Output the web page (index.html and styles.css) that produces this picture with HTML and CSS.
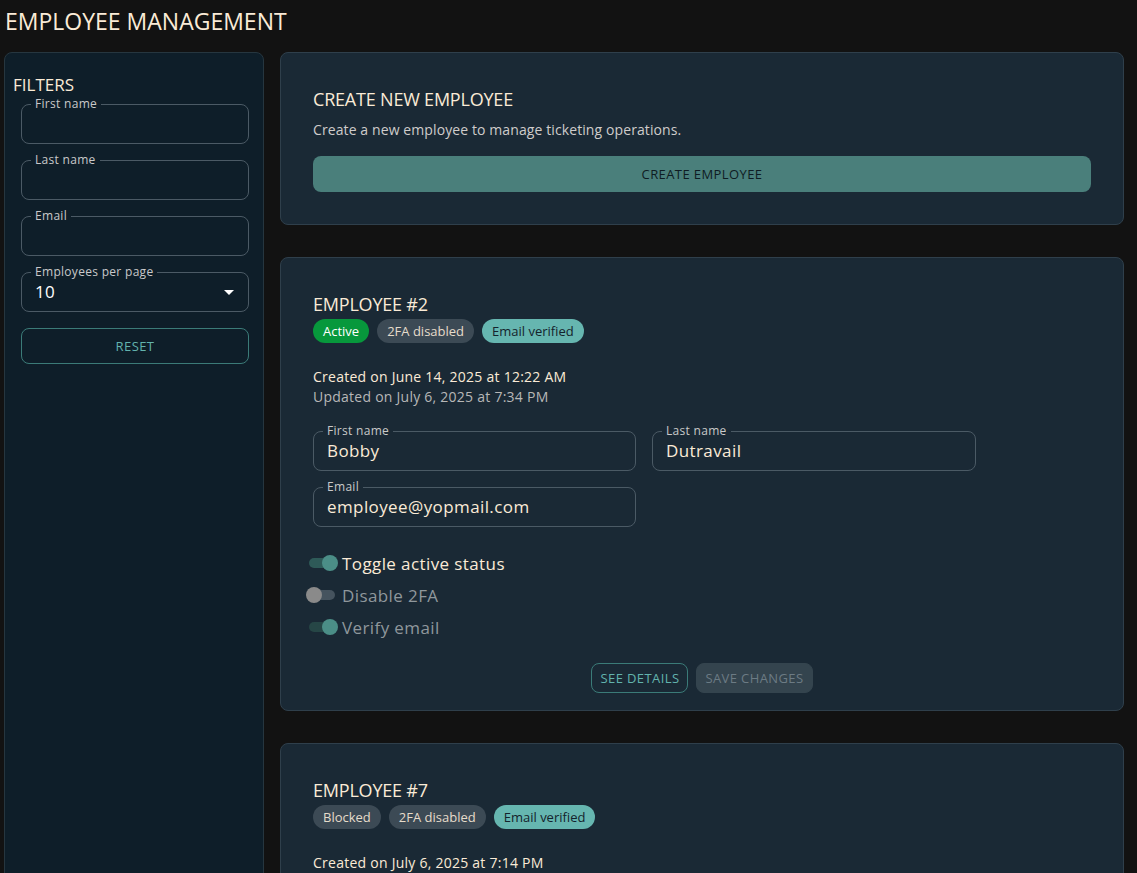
FILE: index.html
```html
<!DOCTYPE html>
<html lang="en">
<head>
<meta charset="utf-8">
<title>Employee Management</title>
<link rel="stylesheet" href="styles.css">
</head>
<body>
<h1 class="page-title">EMPLOYEE MANAGEMENT</h1>
<div class="layout">
  <aside class="sidebar">
    <h2 class="sidebar-title">FILTERS</h2>
    <form class="filters">
      <fieldset class="field"><legend>First name</legend><div class="field-value"></div></fieldset>
      <fieldset class="field"><legend>Last name</legend><div class="field-value"></div></fieldset>
      <fieldset class="field"><legend>Email</legend><div class="field-value"></div></fieldset>
      <fieldset class="field"><legend>Employees per page</legend>
        <div class="field-value select">10<svg class="caret" width="10" height="5" viewBox="0 0 10 5"><path d="M0 0h10L5 5z" fill="#ffffff"/></svg></div>
      </fieldset>
      <button type="button" class="btn btn-outline btn-block">RESET</button>
    </form>
  </aside>

  <main class="main">
    <section class="card">
      <h2 class="card-title">CREATE NEW EMPLOYEE</h2>
      <p class="card-desc">Create a new employee to manage ticketing operations.</p>
      <button type="button" class="btn btn-primary">CREATE EMPLOYEE</button>
    </section>

    <section class="card card-employee">
      <h2 class="card-title">EMPLOYEE #2</h2>
      <div class="chips">
        <span class="chip chip-green">Active</span>
        <span class="chip chip-grey">2FA disabled</span>
        <span class="chip chip-teal">Email verified</span>
      </div>
      <div class="dates">
        <p class="created">Created on June 14, 2025 at 12:22 AM</p>
        <p class="updated">Updated on July 6, 2025 at 7:34 PM</p>
      </div>
      <div class="form-grid">
        <fieldset class="field"><legend>First name</legend><div class="field-value">Bobby</div></fieldset>
        <fieldset class="field"><legend>Last name</legend><div class="field-value">Dutravail</div></fieldset>
        <fieldset class="field"><legend>Email</legend><div class="field-value">employee@yopmail.com</div></fieldset>
      </div>
      <div class="toggles">
        <label class="toggle on"><span class="switch"><span class="track"></span><span class="thumb"></span></span><span class="toggle-label">Toggle active status</span></label>
        <label class="toggle off disabled"><span class="switch"><span class="track"></span><span class="thumb"></span></span><span class="toggle-label">Disable 2FA</span></label>
        <label class="toggle on disabled"><span class="switch"><span class="track"></span><span class="thumb"></span></span><span class="toggle-label">Verify email</span></label>
      </div>
      <div class="actions">
        <button type="button" class="btn btn-outline btn-small">SEE DETAILS</button>
        <button type="button" class="btn btn-disabled btn-small">SAVE CHANGES</button>
      </div>
    </section>

    <section class="card card-employee">
      <h2 class="card-title">EMPLOYEE #7</h2>
      <div class="chips">
        <span class="chip chip-grey">Blocked</span>
        <span class="chip chip-grey">2FA disabled</span>
        <span class="chip chip-teal">Email verified</span>
      </div>
      <div class="dates">
        <p class="created">Created on July 6, 2025 at 7:14 PM</p>
        <p class="updated">Updated on July 6, 2025 at 7:20 PM</p>
      </div>
      <div class="form-grid">
        <fieldset class="field"><legend>First name</legend><div class="field-value">Jane</div></fieldset>
        <fieldset class="field"><legend>Last name</legend><div class="field-value">Doe</div></fieldset>
        <fieldset class="field"><legend>Email</legend><div class="field-value">jane.doe@yopmail.com</div></fieldset>
      </div>
      <div class="toggles">
        <label class="toggle off"><span class="switch"><span class="track"></span><span class="thumb"></span></span><span class="toggle-label">Toggle active status</span></label>
        <label class="toggle off disabled"><span class="switch"><span class="track"></span><span class="thumb"></span></span><span class="toggle-label">Disable 2FA</span></label>
        <label class="toggle on disabled"><span class="switch"><span class="track"></span><span class="thumb"></span></span><span class="toggle-label">Verify email</span></label>
      </div>
      <div class="actions">
        <button type="button" class="btn btn-outline btn-small">SEE DETAILS</button>
        <button type="button" class="btn btn-disabled btn-small">SAVE CHANGES</button>
      </div>
    </section>
  </main>
</div>
</body>
</html>
```

FILE: styles.css
```css
* { box-sizing: border-box; }

html { background: #121212; }

body {
  margin: 0;
  padding: 0 13px 0 4px;
  background: #121212;
  color: #faebd7;
  font-family: "Open Sans", "DejaVu Sans", sans-serif;
}

.page-title {
  margin: 0 0 10px 1px;
  font-size: 23px;
  font-weight: 400;
  line-height: 42px;
  letter-spacing: 0;
  color: #faebd7;
}

.layout {
  display: grid;
  grid-template-columns: 260px 1fr;
  gap: 16px;
  align-items: stretch;
}

/* Sidebar */
.sidebar {
  background: #0e1e29;
  border: 1px solid #26363f;
  border-radius: 8px;
  padding: 19px 14px 24px 8px;
}

.sidebar-title {
  margin: 0;
  font-size: 17px;
  font-weight: 400;
  line-height: 25px;
  color: #faebd7;
}

.filters {
  display: flex;
  flex-direction: column;
  gap: 9px;
  padding-left: 8px;
}

.filters .btn-block { margin-top: 7px; }

/* Outlined field */
.field {
  margin: 0;
  padding: 0 13px;
  border: 1px solid #4b5a65;
  border-radius: 8px;
  height: 47px;
  min-width: 0;
}

.field legend {
  margin-left: -4px;
  padding: 0 4px;
  font-size: 12px;
  line-height: 14px;
  letter-spacing: 0.3px;
  color: #c9c9c9;
}

.field-value {
  height: 26px;
  line-height: 26px;
  font-size: 17px;
  letter-spacing: 0.4px;
  color: #faebd7;
  white-space: nowrap;
}

.sidebar .field-value { color: #ffffff; }

.select {
  display: flex;
  align-items: center;
  justify-content: space-between;
  padding-right: 1px;
}

.caret { display: block; }

/* Buttons */
.btn {
  font-family: inherit;
  font-size: 13px;
  border-radius: 8px;
  cursor: pointer;
  letter-spacing: 0.4px;
}

.btn-block {
  height: 36px;
  width: 100%;
}

.btn-outline {
  background: transparent;
  border: 1px solid #3b7b78;
  color: #62b3ad;
}

.btn-primary {
  display: block;
  width: 100%;
  height: 36px;
  margin-top: 16px;
  background: #4a7f7b;
  border: none;
  color: #0f1c23;
}

.btn-small {
  height: 30px;
  padding: 0 8px;
}

.btn-disabled {
  background: #34444e;
  border: 1px solid #34444e;
  color: #6c7b84;
}

/* Main column */
.main {
  display: flex;
  flex-direction: column;
  gap: 32px;
  min-width: 0;
}

.card {
  background: #1a2935;
  border: 1px solid #2f3f4b;
  border-radius: 8px;
  padding: 32px;
}

.card-employee { padding-bottom: 17px; }

.card-title {
  margin: 0;
  font-size: 18px;
  font-weight: 400;
  line-height: 28px;
  letter-spacing: -0.2px;
  color: #faebd7;
}

.card-desc {
  margin: 7px 0 0;
  font-size: 14px;
  line-height: 20px;
  letter-spacing: 0.1px;
  color: #cfcccb;
}

.chips {
  display: flex;
  gap: 8px;
  margin-top: 1px;
}

.chip {
  display: inline-flex;
  align-items: center;
  height: 24px;
  padding: 0 10px;
  border-radius: 12px;
  font-size: 13px;
}

.chip-green { background: #07983c; color: #ffffff; }
.chip-grey { background: #3c4a55; color: #e6dccb; }
.chip-teal { background: #66b6b0; color: #14232c; }

.dates { margin-top: 24px; }

.dates p {
  margin: 0;
  font-size: 14px;
  line-height: 20px;
  letter-spacing: 0.25px;
}

.created { color: #faebd7; }
.updated { color: #b7b7b7; }

.form-grid {
  display: grid;
  grid-template-columns: 323px 324px;
  column-gap: 16px;
  row-gap: 9px;
  margin-top: 17px;
}

.toggles {
  display: flex;
  flex-direction: column;
  margin-top: 20px;
}

.toggle {
  display: flex;
  align-items: center;
  height: 32px;
  margin-left: -7px;
  gap: 4px;
}

.switch {
  position: relative;
  width: 32px;
  height: 16px;
  flex: none;
}

.track {
  position: absolute;
  left: 3px;
  right: 3px;
  top: 3px;
  height: 10px;
  border-radius: 5px;
  background: #2e5a58;
}

.thumb {
  position: absolute;
  top: 0;
  width: 16px;
  height: 16px;
  border-radius: 50%;
  background: #4b8e87;
}

.toggle.on .thumb { right: 0; }
.toggle.off .thumb { left: 0; background: #8a8a8a; }
.toggle.off .track { background: #45535e; }
.toggle.on.disabled .track { background: #264646; }

.toggle-label {
  font-size: 17px;
  letter-spacing: 0.4px;
  color: #faebd7;
}

.toggle.disabled .toggle-label { color: #8f979c; }

.actions {
  display: flex;
  justify-content: center;
  gap: 8px;
  margin-top: 20px;
}
```
